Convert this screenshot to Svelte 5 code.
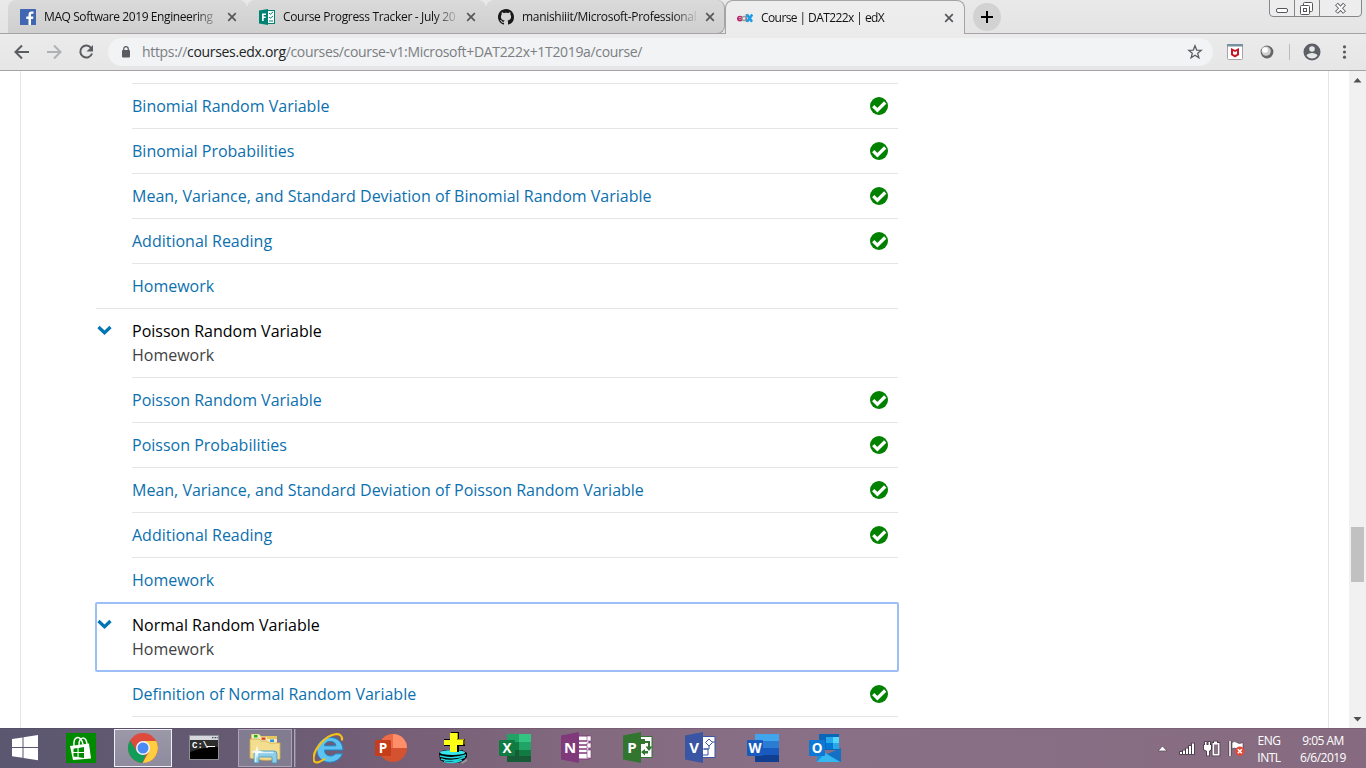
<script>
  const tabs = [
    { icon: 'facebook', title: 'MAQ Software 2019 Engineering', spacing: -0.41 },
    { icon: 'forms', title: 'Course Progress Tracker - July 20', spacing: -0.33 },
    { icon: 'github', title: 'manishiiit/Microsoft-Professional', spacing: -0.31 },
    { icon: 'edx', title: 'Course | DAT222x | edX', active: true, spacing: -0.58 }
  ];

  const sections = [
    {
      items: [
        ['Binomial Random Variable', true],
        ['Binomial Probabilities', true],
        ['Mean, Variance, and Standard Deviation of Binomial Random Variable', true],
        ['Additional Reading', true],
        ['Homework', false]
      ]
    },
    {
      title: 'Poisson Random Variable',
      items: [
        ['Poisson Random Variable', true],
        ['Poisson Probabilities', true],
        ['Mean, Variance, and Standard Deviation of Poisson Random Variable', true],
        ['Additional Reading', true],
        ['Homework', false]
      ]
    },
    {
      title: 'Normal Random Variable',
      focused: true,
      items: [['Definition of Normal Random Variable', true]]
    }
  ];

  const apps = ['store', 'chrome', 'cmd', 'explorer', 'ie', 'powerpoint', 'plus', 'excel', 'onenote', 'project', 'visio', 'word', 'outlook'];
</script>

{#snippet favicon(name)}
  <svg class="fav" width="16" height="16" viewBox="0 0 16 16">
    {#if name === 'facebook'}
      <rect width="16" height="16" rx="0.6" fill="#4267b2" />
      <path d="M11 16V9.9h2.1l.3-2.4H11V6c0-.7.2-1.2 1.2-1.2h1.3V2.6c-.2 0-1-.1-1.9-.1-1.9 0-3.1 1.100-3.100 3.200v1.800H6.300v2.400h2.200V16z" fill="#fff" />
    {:else if name === 'forms'}
      <rect x="7.500" y="1.500" width="8" height="13" fill="#fff" stroke="#008272" />
      <path d="M10 4l1.200 1.300L14 3M10 8l1.200 1.300L14 7M10 12h4" fill="none" stroke="#008272" stroke-width="1" />
      <path d="M0 1.600L9 0v16L0 14.400z" fill="#008272" />
      <path d="M3 4.500h4V6H4.700v1.400h2V9h-2v3H3z" fill="#fff" />
    {:else if name === 'github'}
      <path fill="#191717" d="M8 0C3.580 0 0 3.580 0 8c0 3.540 2.290 6.530 5.470 7.590.4.070.550-.170.550-.380 0-.190-.010-.820-.010-1.490-2.010.370-2.530-.490-2.690-.940-.090-.230-.480-.940-.820-1.130-.280-.150-.680-.520-.010-.530.630-.010 1.080.580 1.230.820.720 1.210 1.870.870 2.330.660.070-.520.280-.870.510-1.070-1.780-.200-3.640-.890-3.640-3.950 0-.870.310-1.590.820-2.150-.080-.200-.360-1.020.080-2.120 0 0 .670-.210 2.200.820.640-.180 1.320-.270 2-.270s1.360.090 2 .270c1.530-1.040 2.200-.820 2.200-.820.440 1.100.160 1.920.080 2.120.510.560.820 1.270.820 2.150 0 3.070-1.870 3.750-3.650 3.950.290.250.540.730.540 1.480 0 1.070-.010 1.930-.010 2.200 0 .210.150.460.550.380A8.010 8.010 0 0016 8c0-4.420-3.580-8-8-8z" />
    {:else}
      <circle cx="2.900" cy="8.600" r="2.100" fill="none" stroke="#b72667" stroke-width="1.700" />
      <path d="M1.500 8.700h3.300" stroke="#b72667" stroke-width="1.200" />
      <circle cx="7.100" cy="8.600" r="2" fill="none" stroke="#9a9c9f" stroke-width="1.500" />
      <path d="M9.300 4v8" stroke="#7c8794" stroke-width="1.300" />
      <path d="M10 4.500l5 7.300M15.300 4.500l-5.300 7.300" stroke="#1c9cea" stroke-width="2.600" />
    {/if}
  </svg>
{/snippet}

{#snippet office(letter, dark)}
  <rect x="0" y="8" width="16" height="16" rx="1" fill={dark} />
  <text x="8" y="20.700" class="letter">{letter}</text>
{/snippet}

{#snippet book(letter, color)}
  <path d="M0 3.500L18 0v31L0 27.500z" fill={color} />
  <text x="9" y="20.800" class="letter big">{letter}</text>
{/snippet}

{#snippet appIcon(name)}
  <svg width="32" height="32" viewBox="0 0 32 32">
    {#if name === 'store'}
      <rect x="1" y="1" width="30" height="30" fill="#008a00" />
      <path d="M5 14l19-2.500 2 15-18 1.500z" fill="#fff" />
      <path d="M9 14c-1-10 7-12 9-1.500M14 13c0-9 7-9 8-1" fill="none" stroke="#fff" stroke-width="1.500" />
      <path d="M8.500 16.700l4-.600v3.900H8.500zM13.600 15.900l5.400-.800v4.900h-5.400zM8.500 21.100h4V25l-4-.600zM13.600 21.100H19V26l-5.400-.800z" fill="#008a00" />
    {:else if name === 'chrome'}
      <circle cx="16" cy="16" r="15" fill="#dd4b3e" />
      <path d="M16 9h13.200A15 15 0 0 1 15.500 31L22 19.500z" fill="#ffcd40" />
      <path d="M3 8.500L9.900 19.500 16 23l3-.700L15.500 31A15 15 0 0 1 3 8.500z" fill="#109d59" />
      <circle cx="16" cy="16" r="7" fill="#f5f5f5" />
      <circle cx="16" cy="16" r="5.500" fill="#4a8af4" />
    {:else if name === 'cmd'}
      <rect x="0.500" y="3.500" width="29" height="24" fill="#000" stroke="#8c8f96" />
      <path d="M1 4h28v4H1z" fill="#d5d7dc" />
      <path d="M1 8h28v7Q14 15 1 20z" fill="#2e2e2e" />
      <path d="M23 5.700h1.500M25.500 5.700H27M27.700 5.700h1" stroke="#456" stroke-width="1.300" />
      <text x="3" y="16" class="mono">C:\</text>
      <path d="M18 14.500h8" stroke="#fff" />
    {:else if name === 'explorer'}
      <path d="M2 2h8l2 2h16v5H2z" fill="#e4c75d" />
      <path d="M3 8V2.500h7L12 5v3z" fill="#f6ebbd" />
      <path d="M5 3h3.500v2.500H5z" fill="#16b52b" />
      <path d="M10 9V5h8v4z" fill="#f6ebbd" />
      <path d="M12.500 5.500h4v2.300h-4z" fill="#d93b20" />
      <path d="M18 11V7h10v4z" fill="#f6ebbd" />
      <path d="M21 7.500h4V10h-4z" fill="#3195e1" />
      <path d="M1 7h9l2 2h6l2 2h11v16q-15 3-30-1z" fill="#f3dd8e" stroke="#d2ae4c" stroke-width=".800" />
      <path d="M5 31v-9q0-3 3-3h17q3 0 3 3v9h-5v-5q0-1-1-1H11q-1 0-1 1v5z" fill="#8dcde8" stroke="#4396bd" stroke-width=".800" />
      <path d="M6.500 30v-8q0-1.500 2-1.500h16" fill="none" stroke="#d7f2fb" stroke-width="1.500" />
      <path d="M8 13l1.200 5.300L15 20l-5.800 1.200L8 27l-1.200-5.800L2 20l4.800-1.700z" fill="#fff" opacity=".850" />
    {:else if name === 'ie'}
      <path d="M30 18H11.500c0 7.500 9 7 11 3.800h7C24 35 3.500 32 4 17.500 4.500 2 29.500 1 30 18zM23 13.800c-.500-6-11-6-11.500 0z" fill="#5cc3f3" stroke="#2088c9" stroke-width="1" />
      <path d="M29 8.500C30-1.500 17 1 8 11S-2 33 6 30q3-1 6-3.500" fill="none" stroke="#f5c018" stroke-width="2.200" />
    {:else if name === 'powerpoint'}
      <circle cx="18" cy="16" r="14" fill="#d35230" />
      <path d="M18 2a14 14 0 0 1 14 14H18z" fill="#ff8f6b" />
      <path d="M18 2v14H4A14 14 0 0 1 18 2" fill="#ed6c47" />
      {@render office('P', '#c43e1c')}
    {:else if name === 'plus'}
      <path d="M2 21l5-3h18l5 3v4l-5 5-7 1H9l-6-3z" fill="#000" />
      <path d="M24 30l6-3v2l-5 3z" fill="#999" />
      <ellipse cx="15.500" cy="20.500" rx="12.500" ry="2.600" fill="#35e8ee" />
      <path d="M3 24q12 4 26-1M4 27q12 4 24-2M7 29.800q10 2 18-1.500" stroke="#20d5de" stroke-width="1.500" fill="none" />
      <path d="M14 0h8v7h6v7h-6v6h-8v-6H7V7h6z" fill="#000" />
      <path d="M13 1h7v7h6v5h-6v7h-7v-7H7V8h6z" fill="#ffff16" />
      <path d="M20.500 1v6.500h6.500v5" fill="none" stroke="#b3a800" stroke-width="1" />
    {:else if name === 'excel'}
      <rect x="8" y="2" width="24" height="28" fill="#185c37" />
      <path d="M8 2h12v8H8z" fill="#21a366" /><path d="M20 2h12v8H20z" fill="#33c481" />
      <path d="M8 10h12v8H8z" fill="#107c41" /><path d="M20 10h12v8H20z" fill="#21a366" />
      <path d="M20 18h12v6H20z" fill="#107c41" />
      {@render office('X', '#107c41')}
    {:else if name === 'onenote'}
      <path d="M17 4h11v23H17z" fill="#fff" stroke="#80397b" />
      <path d="M18 9h8M18 13h8M18 17h8M18 21h8" stroke="#80397b" stroke-width="1.500" />
      <path d="M26 4h4v5h-4zM26 11h4v5h-4zM26 18h4v8h-4z" fill="#fff" stroke="#80397b" stroke-width=".600" />
      {@render book('N', '#80397b')}
    {:else if name === 'project'}
      <path d="M17 4.500h12v21H17z" fill="#fff" stroke="#31752f" />
      <path d="M18 8h3v3h-3zM19 10h7v8" fill="none" stroke="#31752f" stroke-width="2" />
      <path d="M22.500 14.500h7L26 19zM18 20l4-3v2h3v2.500h-3v2z" fill="#31752f" />
      {@render book('P', '#31752f')}
    {:else if name === 'visio'}
      <path d="M17 4.500h13v21H17z" fill="#fff" stroke="#3955a3" />
      <path d="M24 7l3.500 3.500L24 14l-3.500-3.500zM24 14v3h-5M18 17h5v6h-5M27 10h3" fill="none" stroke="#3955a3" />
      {@render book('V', '#3955a3')}
    {:else if name === 'word'}
      <path d="M8 2h24v7H8z" fill="#41a5ee" /><path d="M8 9h24v7H8z" fill="#2b7cd3" />
      <path d="M8 16h24v7H8z" fill="#185abd" /><path d="M8 23h24v7H8z" fill="#103f91" />
      {@render office('W', '#185abd')}
    {:else}
      <path d="M10 2h20v16H10z" fill="#0a67b8" />
      <path d="M17 5h7v6h-7z" fill="#28a8ea" /><path d="M24 5h6v6h-6z" fill="#50d9ff" />
      <path d="M17 11h7v6h-7z" fill="#0078d4" /><path d="M24 11h6v6h-6z" fill="#28a8ea" />
      <path d="M8 16l12 7 12-7v14H8z" fill="#1490df" />
      <path d="M32 16v14L18 22z" fill="#1470c4" /><path d="M8 30h23L16 21z" fill="#35b8f1" />
      {@render office('O', '#0f78d4')}
    {/if}
  </svg>
{/snippet}

<div class="screen">
  <header class="tabstrip">
    {#each tabs as tab}
      <div class={['tab', tab.icon, tab.active && 'active']}>
        {@render favicon(tab.icon)}
        <span class="tab-title" style:letter-spacing="{tab.spacing}px">{tab.title}</span>
        <svg class="close" width="10" height="10" viewBox="0 0 10 10"><path d="M1.200 1.200l7.600 7.600M8.800 1.200L1.200 8.800" stroke="#55585b" stroke-width="1.700" /></svg>
      </div>
    {/each}
    <div class="new-tab">
      <svg width="12" height="12" viewBox="0 0 12 12"><path d="M6 0v12M0 6h12" stroke="#000" stroke-width="2" /></svg>
    </div>
    <div class="window-buttons">
      <svg width="94" height="18" viewBox="0 0 94 18" fill="none" stroke="#85868a">
        <path d="M.500 0v13q0 3.500 3.500 3.500h85q3.500 0 3.500-3.500V0M25.500 0v16M50.500 0v16" fill="#ededed" />
        <rect x="7.500" y="8.500" width="11" height="4" rx="1.500" fill="#fff" stroke="#55565d" />
        <g stroke="#55565d" fill="#fff">
          <rect x="34.500" y="2.500" width="9" height="9" rx="1" />
          <rect x="31.500" y="5.500" width="9" height="9" rx="1" />
          <rect x="34.500" y="8.500" width="3" height="3" />
        </g>
        <path d="M67.500 4l8 8.500M75.500 4l-8 8.500" stroke="#55565d" stroke-width="4" />
        <path d="M67.900 4.500l7.200 7.600M75.100 4.500l-7.200 7.600" stroke="#f8f8f8" stroke-width="2.200" />
      </svg>
    </div>
  </header>

  <div class="toolbar">
    <svg class="nav" width="100" height="36" viewBox="0 0 100 36" fill="none" stroke-width="2">
      <path d="M29 18H16M22 11.500L15.500 18l6.500 6.500" stroke="#5a5c60" />
      <path d="M47 18h13M54 11.500l6.500 6.500-6.500 6.500" stroke="#b0b1b3" />
      <path d="M91.300 14.200A6 6 0 1 0 92 19.500" stroke="#5a5c60" />
      <path d="M93 11v6.500h-6.500z" fill="#5a5c60" />
    </svg>
    <div class="omnibox">
      <svg width="8" height="12" viewBox="0 0 8 12"><rect y="4" width="8" height="7.500" rx="1" fill="#5a5c60" /><path d="M1.700 5V2.900a2.300 2.300 0 0 1 4.600 0V5" fill="none" stroke="#5a5c60" stroke-width="1.300" /></svg>
      <span class="url">https://<b>courses.edx.org</b>/courses/course-v1:Microsoft+DAT222x+1T2019a/course/</span>
      <svg class="star" width="16" height="16" viewBox="0 0 16 16"><path d="M8 1.800l1.700 4.300 4.500.300-3.500 2.900 1.200 4.500L8 11.300l-3.900 2.500 1.200-4.500-3.500-2.900 4.500-.300z" fill="none" stroke="#5a5c60" stroke-width="1.300" /></svg>
    </div>
    <svg class="extensions" width="153" height="36" viewBox="0 0 153 36">
      <rect x="14.500" y="10.500" width="15" height="15" rx="1" fill="#fff" stroke="#a5a3a8" />
      <path d="M14 10h16v2.500H14z" fill="#77929f" />
      <path d="M18 14l4 2 4-2v7l-4 2.500L18 21z" fill="#c51623" />
      <path d="M20 17l2 1 2-1v3l-2 1-2-1z" fill="#fff" />
      <circle cx="54" cy="18" r="6.400" fill="#666" />
      <circle cx="53.200" cy="17.200" r="4.600" fill="#cfcfcf" />
      <circle cx="52" cy="16" r="2.800" fill="#fff" />
      <path d="M76.500 10v16" stroke="#babbbd" />
      <circle cx="99" cy="18" r="8.500" fill="#5c5f65" />
      <circle cx="99" cy="15" r="2.800" fill="#e7e7e7" />
      <path d="M93.500 21.500c1-3.500 10-3.500 11 0q-2 3-5.500 3t-5.500-3" fill="#e7e7e7" />
      <g fill="#5a5c60"><circle cx="131.500" cy="12.800" r="1.600" /><circle cx="131.500" cy="18" r="1.600" /><circle cx="131.500" cy="23.200" r="1.600" /></g>
    </svg>
  </div>

  <div class="viewport">
    <main class="page">
      <div class="outline">
        {#each sections as section}
          <section>
            {#if section.title}
              <div class={['heading', section.focused && 'focused']}>
                <svg class="chevron" width="17" height="11" viewBox="0 0 17 11"><path d="M2.500 2l6 5.700 6-5.700" fill="none" stroke="#0075b4" stroke-width="3.200" /></svg>
                <div class="heading-text">
                  <h4>{section.title}</h4>
                  <p>Homework</p>
                </div>
              </div>
            {/if}
            <ul>
              {#each section.items as [label, done]}
                <li>
                  <span>{label}</span>
                  {#if done}
                    <svg width="18" height="18" viewBox="0 0 18 18"><circle cx="9" cy="9" r="9" fill="#008100" /><path d="M3.200 9.200l4.200 4 7.800-7.700" fill="none" stroke="#fff" stroke-width="3.200" /></svg>
                  {/if}
                </li>
              {/each}
            </ul>
          </section>
        {/each}
      </div>
    </main>
    <aside class="scrollbar">
      <svg width="9" height="5" viewBox="0 0 9 5"><path d="M4.500 0L8.500 4.500h-8z" fill="#505050" /></svg>
      <div class="track"><div class="thumb"></div></div>
      <svg width="9" height="5" viewBox="0 0 9 5"><path d="M4.500 4.500L8.500 0h-8z" fill="#505050" /></svg>
    </aside>
  </div>

  <footer class="taskbar">
    <div class="start">
      <svg width="28" height="26" viewBox="0 0 28 26"><path d="M1 4l10.500-1.600V12H1zM12.500 2.200L27 0v12H12.500zM1 13h10.500v9.700L1 21.200zM12.500 13H27v12.300l-14.500-2.200z" fill="#fff" /></svg>
    </div>
    {#each apps as app}
      <div class={['app', app]}>
        <div class="button">{@render appIcon(app)}</div>
      </div>
    {/each}
    <div class="tray">
      <svg width="88" height="20" viewBox="0 0 88 20">
        <path d="M1 12l4.500-5 4.500 5z" fill="#fff" stroke="#5f4c61" stroke-width=".800" />
        <g fill="#fff" stroke="#463847" stroke-width="1.600" paint-order="stroke">
          <path d="M23 13h2v2h-2zM26 11.500h2V15h-2zM29 9.500h2V15h-2zM32 7h2v8h-2zM35 4.500h2V15h-2z" />
          <path d="M48 3h1.500v3h2V3H53v3h1v4.500l-2 1.500v4.500h-2V12l-3-1.500V6h1z" />
          <path d="M57 2.500h3V4h2.500v12.500H55.500V4H57z" />
        </g>
        <rect x="57" y="5.500" width="4" height="9.500" fill="#8a7185" />
        <path d="M73 2v15" stroke="#463847" stroke-width="3" />
        <path d="M73 2v15" stroke="#fff" stroke-width="1.600" />
        <path d="M75 3.500q3-2 5 0t6 0V10q-3 2-6 0t-5 0z" fill="#fff" stroke="#463847" stroke-width=".600" />
        <circle cx="82.800" cy="12.300" r="4.700" fill="#e14936" />
        <path d="M80.800 10.300l4 4M84.800 10.300l-4 4" stroke="#fff" stroke-width="1.500" />
      </svg>
      <div class="lang"><span>ENG</span><span>INTL</span></div>
      <div class="clock"><span>9:05 AM</span><span>6/6/2019</span></div>
    </div>
  </footer>
</div>

<style>
  :global(body) { margin: 0; overflow: hidden; }
  * { box-sizing: border-box; }
  svg { display: block; flex: none; }
  .screen { width: 1366px; height: 768px; display: flex; flex-direction: column; background: #fff; font-family: "Open Sans", "Noto Sans", sans-serif; overflow: hidden; }

  .tabstrip { height: 34px; flex: none; display: flex; align-items: stretch; padding-left: 8px; background: linear-gradient(#e9e9e9, #e4e4e4); box-shadow: inset 0 -1px #a5a3a5; }
  .tab { position: relative; width: 239px; height: 34px; display: flex; align-items: center; padding: 0 10px 0 12px; background: linear-gradient(#dadada, #cfcfcf); border-bottom: 1px solid #a5a3a5; border-radius: 8px 8px 0 0; }
  .tab.github { border-radius: 8px 8px 8px 0; border-right: 1px solid #a5a3a5; padding-right: 9px; }
  .tab.facebook::after, .tab.forms::after { content: ""; position: absolute; right: -1px; top: 7px; width: 1px; height: 20px; background: #777; }
  .tab.active { width: 240px; background: linear-gradient(#eeeeee, #ebebeb); border: 1px solid #a5a3a5; border-bottom: 0; padding-left: 11px; padding-right: 10px; }
  .tab-title { flex: 1; margin: 0 6px 0 8px; overflow: hidden; white-space: nowrap; font-size: 12px; line-height: 20px; color: #111; mask-image: linear-gradient(90deg, #000 calc(100% - 26px), transparent); }
  .new-tab { width: 28px; height: 28px; margin: 3px 0 0 8px; border-radius: 50%; background: #d2d2d2; display: flex; align-items: center; justify-content: center; }
  .window-buttons { margin-left: auto; margin-right: 3px; }

  .toolbar { height: 37px; flex: none; display: flex; background: linear-gradient(#ebebeb, #e6e6e6); border-bottom: 1px solid #a5a3a5; }
  .omnibox { width: 1105px; height: 28px; margin: 4px 0 0 8px; padding: 0 10px 0 14px; border-radius: 14px; background: #f1f3f4; display: flex; align-items: center; gap: 12px; }
  .url { flex: 1; font-size: 14px; line-height: 20px; letter-spacing: -0.33px; color: #7b7e82; white-space: nowrap; }
  .url b { font-weight: 400; color: #222426; }

  .viewport { height: 657px; flex: none; display: flex; overflow: hidden; }
  .page { width: 1309px; margin: 0 20px; border: solid #e4e4e4; border-width: 0 1px; flex: none; }
  .outline { width: 802px; margin: 12px 0 0 75px; border-top: 0; }
  ul { list-style: none; margin: 0; padding: 0 0 0 36px; }
  li { height: 45px; padding: 0 10px 1px 0; border-top: 1px solid #e5e5e5; display: flex; align-items: center; justify-content: space-between; color: #0c70ae; font-size: 16px; line-height: 24px; }
  section:last-child li:last-child { height: 46px; border-bottom: 1px solid #e5e5e5; }
  .heading { height: 69px; display: flex; align-items: flex-start; padding-top: 10px; border-top: 1px solid #e5e5e5; font-size: 16px; line-height: 24px; }
  .heading.focused { position: relative; border-top-color: transparent; }
  .heading.focused::after { content: ""; position: absolute; inset: -1px -1px -1px -1px; border: 2px solid #9dbff8; border-radius: 2px; }
  .chevron { margin: 6px 19px 0 0; }
  h4, p { margin: 0; font-size: 16px; font-weight: 400; }
  h4 { color: #000; }
  p { color: #414141; }
  .scrollbar { width: 17px; flex: none; background: #f1f1f1; display: flex; flex-direction: column; align-items: center; padding: 7px 0 6px; }
  .track { flex: 1; padding-top: 444px; }
  .thumb { width: 13px; height: 55px; background: #c1c1c1; }

  .taskbar { height: 40px; flex: none; display: flex; background: linear-gradient(90deg, #5b5770 0, #655a72 230px, #765f77 400px, #82697e 580px, #8a7087 800px, #866b80 1366px); box-shadow: inset 0 1px rgba(60, 45, 65, .18); }
  .start { width: 50px; padding: 7px 0 0 11px; }
  .app { width: 62px; padding: 1px 2px; }
  .button { width: 58px; height: 38px; display: flex; align-items: center; justify-content: center; }
  .chrome .button { background: linear-gradient(#9b98a8, #8f8b9f); border: 1px solid #f0eff3; }
  .explorer .button { width: 54px; background: #827c90; border: 1px solid #aaa4b4; box-shadow: 2px 0 #655a72, 3px 0 #aaa4b4, 4px 0 #827c90; }
  .letter { font: 700 13.5px "Open Sans", sans-serif; fill: #fff; text-anchor: middle; }
  .letter.big { font-size: 15px; }
  .mono { font: 700 9px "Liberation Mono", monospace; fill: #fff; }
  .tray { margin-left: auto; display: flex; padding: 0 19px 0 0; color: #fff; font-size: 12px; line-height: 17px; }
  .tray svg { margin: 11px 11px 0 0; }
  .lang, .clock { display: flex; flex-direction: column; align-items: center; padding-top: 4px; letter-spacing: -0.5px; white-space: nowrap; }
  .lang { width: 26px; margin-right: 17px; }
  .clock { width: 48px; }
</style>
